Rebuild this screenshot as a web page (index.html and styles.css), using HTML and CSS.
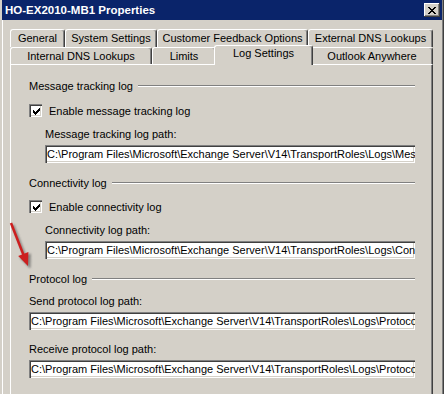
FILE: index.html
```html
<!DOCTYPE html>
<html lang="en">
<head>
  <meta charset="UTF-8">
  <title>HO-EX2010-MB1 Properties</title>
  <link rel="stylesheet" href="styles.css">
</head>
<body>
  <div class="window">
    <div class="titlebar">
      <span class="title">HO-EX2010-MB1 Properties</span>
      <span class="close">
        <svg width="8" height="7" viewBox="0 0 8 7"><path d="M0 0h2v1H0z M6 0h2v1H6z M1 1h2v1H1z M5 1h2v1H5z M2 2h4v1H2z M3 3h2v1H3z M2 4h4v1H2z M1 5h2v1H1z M5 5h2v1H5z M0 6h2v1H0z M6 6h2v1H6z" fill="#000"/></svg>
      </span>
    </div>

    <div class="tabs">
      <div class="tab-row back">
        <div class="tab w-general">General</div>
        <div class="tab w-system">System Settings</div>
        <div class="tab w-feedback">Customer Feedback Options</div>
        <div class="tab w-external">External DNS Lookups</div>
      </div>
      <div class="tab-row front">
        <div class="tab w-internal">Internal DNS Lookups</div>
        <div class="tab w-limits">Limits</div>
        <div class="tab w-log active">Log Settings</div>
        <div class="tab w-outlook">Outlook Anywhere</div>
      </div>
    </div>

    <div class="panel">
      <div class="group">
        <div class="group-title">Message tracking log</div>
        <div class="check">
          <span class="box"><svg width="7" height="7" viewBox="0 0 7 7"><path d="M0 2h1v3H0z M1 3h1v3H1z M2 4h1v3H2z M3 3h1v3H3z M4 2h1v3H4z M5 1h1v3H5z M6 0h1v3H6z" fill="#000"/></svg></span>
          <span>Enable message tracking log</span>
        </div>
        <div class="field indent">
          <div class="field-label">Message tracking log path:</div>
          <div class="textbox">C:\Program Files\Microsoft\Exchange Server\V14\TransportRoles\Logs\MessageTracking</div>
        </div>
      </div>

      <div class="group">
        <div class="group-title">Connectivity log</div>
        <div class="check">
          <span class="box"><svg width="7" height="7" viewBox="0 0 7 7"><path d="M0 2h1v3H0z M1 3h1v3H1z M2 4h1v3H2z M3 3h1v3H3z M4 2h1v3H4z M5 1h1v3H5z M6 0h1v3H6z" fill="#000"/></svg></span>
          <span>Enable connectivity log</span>
        </div>
        <div class="field indent">
          <div class="field-label">Connectivity log path:</div>
          <div class="textbox">C:\Program Files\Microsoft\Exchange Server\V14\TransportRoles\Logs\Connectivity</div>
        </div>
      </div>

      <div class="group">
        <div class="group-title">Protocol log</div>
        <div class="field first">
          <div class="field-label">Send protocol log path:</div>
          <div class="textbox">C:\Program Files\Microsoft\Exchange Server\V14\TransportRoles\Logs\ProtocolLog\SmtpSend</div>
        </div>
        <div class="field">
          <div class="field-label">Receive protocol log path:</div>
          <div class="textbox">C:\Program Files\Microsoft\Exchange Server\V14\TransportRoles\Logs\ProtocolLog\SmtpReceive</div>
        </div>
      </div>
    </div>

    <!-- annotation arrow pointing at the protocol log group -->
    <svg class="arrow" width="40" height="60" viewBox="0 0 40 60">
      <defs>
        <filter id="shade" x="-50%" y="-50%" width="200%" height="200%">
          <feGaussianBlur stdDeviation="1.2"/>
        </filter>
      </defs>
      <g transform="translate(2 2)" fill="#555" stroke="#555" opacity="0.6" filter="url(#shade)">
        <line x1="11" y1="8" x2="23.5" y2="40" stroke-width="2.5"/>
        <polygon points="28,51 28.4,36.9 18.2,40.9"/>
      </g>
      <line x1="11" y1="8" x2="23.5" y2="40" stroke="#cc1f1f" stroke-width="2.5"/>
      <polygon points="28,51 28.4,36.9 18.2,40.9" fill="#cc1f1f"/>
    </svg>
  </div>
</body>
</html>
```

FILE: styles.css
```css
:root {
  --face: #d4d0c8;
  --shadow: #808080;
  --dark: #404040;
  --light: #ffffff;
  --caption: #0a246a;
}

body {
  margin: 0;
  background: var(--face);
  font-family: 'Liberation Sans', Arial, sans-serif;
  font-size: 11px;
  color: #000;
}

.window {
  position: relative;
  width: 444px;
  height: 394px;
  overflow: hidden;
  box-shadow: inset 2px 0 0 var(--face), inset 3px 0 0 var(--light),
    inset -1px 0 0 var(--dark), inset -2px 0 0 var(--shadow);
}

.titlebar {
  display: flex;
  align-items: center;
  justify-content: space-between;
  height: 20px;
  margin: 0 2px;
  padding: 0 2px 0 3px;
  background: var(--caption);
}

.title {
  color: #fff;
  font-weight: 700;
  font-size: 11.5px;
}

.close {
  display: flex;
  align-items: center;
  justify-content: center;
  width: 16px;
  height: 14px;
  box-sizing: border-box;
  background: var(--face);
  box-shadow: inset -1px -1px 0 var(--dark), inset 1px 1px 0 var(--light),
    inset -2px -2px 0 var(--shadow);
}

/* tabs */
.tabs {
  padding: 9px 11px 0 10px;
}

.tab-row {
  display: flex;
}

.tab {
  box-sizing: border-box;
  height: 18px;
  line-height: 16px;
  text-align: center;
  white-space: nowrap;
  background: var(--face);
  border-top: 1px solid var(--light);
  border-left: 1px solid var(--light);
  border-right: 1px solid var(--dark);
  border-radius: 3px 3px 0 0;
  box-shadow: inset -1px 0 0 var(--shadow);
}

.front .tab {
  height: 17px;
  line-height: 17px;
}

.w-general { width: 55px; }
.w-system { width: 92px; }
.w-feedback { width: 151px; }
.w-external { width: 125px; }
.w-internal { width: 142px; }
.w-limits { width: 64px; }
.w-log { width: 95px; }
.w-outlook { width: 122px; }

.front .tab.active {
  position: relative;
  z-index: 1;
  width: 99px;
  height: 20px;
  line-height: 15px;
  margin: -2px -2px -1px;
}

/* tab page */
.panel {
  height: 340px;
  margin: 0 11px 0 10px;
  padding: 14px 17px 0 18px;
  border-top: 1px solid var(--light);
  border-left: 1px solid var(--light);
  border-right: 1px solid var(--dark);
  box-shadow: inset -1px 0 0 var(--shadow);
}

.group + .group {
  margin-top: 13px;
}

.group-title {
  display: flex;
  align-items: center;
  height: 13px;
}

.group-title::after {
  content: '';
  flex: 1;
  margin-left: 5px;
  border-top: 1px solid var(--shadow);
  border-bottom: 1px solid var(--light);
}

.check {
  display: flex;
  align-items: center;
  gap: 7px;
  height: 13px;
  margin-top: 12px;
}

.group + .group .check {
  margin-top: 11px;
}

.box {
  display: flex;
  align-items: center;
  justify-content: center;
  width: 13px;
  height: 13px;
  box-sizing: border-box;
  padding: 1px 0 0 1px;
  background: #fff;
  box-shadow: inset 1px 1px 0 var(--shadow), inset 2px 2px 0 var(--dark),
    inset -1px -1px 0 var(--light), inset -2px -2px 0 var(--face);
}

.indent {
  margin-left: 16px;
}

.field-label {
  height: 13px;
  line-height: 13px;
  margin-top: 11px;
}

.field.first .field-label {
  margin-top: 10px;
}

.field + .field .field-label {
  margin-top: 13px;
}

.textbox {
  box-sizing: border-box;
  height: 18px;
  margin-top: 4px;
  padding: 2px 2px 0 2px;
  line-height: 14px;
  white-space: nowrap;
  overflow: hidden;
  background: #fff;
  box-shadow: inset 1px 1px 0 var(--shadow), inset 2px 2px 0 var(--dark),
    inset -1px -1px 0 var(--light), inset -2px -2px 0 var(--face);
}

.arrow {
  position: absolute;
  left: 0;
  top: 215px;
}
```
